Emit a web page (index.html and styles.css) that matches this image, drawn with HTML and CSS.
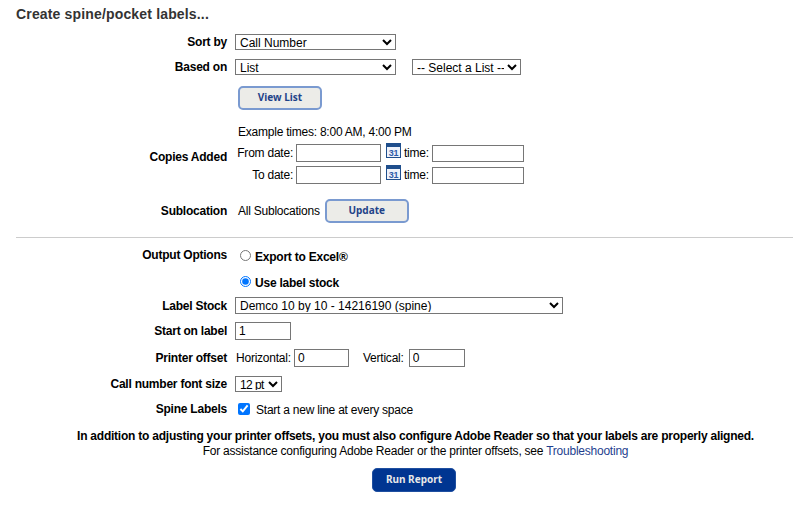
FILE: index.html
```html
<!DOCTYPE html>
<html lang="en">
<head>
    <meta charset="UTF-8">
    <title>Create spine/pocket labels</title>
    <link rel="stylesheet" href="styles.css">
</head>
<body>
    <h1>Create spine/pocket labels...</h1>

    <div class="row row-sort">
        <label class="name">Sort by</label>
        <select class="w-wide"><option>Call Number</option></select>
    </div>
    <div class="row row-based">
        <label class="name">Based on</label>
        <select class="w-wide"><option>List</option></select>
        <select class="w-list"><option>-- Select a List --</option></select>
    </div>
    <div class="row row-view">
        <button class="btn btn-view">View List</button>
    </div>

    <div class="row row-copies">
        <label class="name">Copies Added</label>
        <div class="dates">
            <div class="example">Example times: 8:00 AM, 4:00 PM</div>
            <div class="date-line">
                <span class="date-label">From date:</span>
                <input class="date-input" type="text">
                <svg class="cal" viewBox="0 0 15 15" width="15" height="15"><rect x="0.5" y="0.5" width="14" height="14" fill="#eef2fa" stroke="#1f4e8c"/><rect width="15" height="4" fill="#1f4e8c"/><text x="7.5" y="13" text-anchor="middle" class="cal-num">31</text></svg>
                <span class="time-label">time:</span>
                <input class="time-input" type="text">
            </div>
            <div class="date-line">
                <span class="date-label">To date:</span>
                <input class="date-input" type="text">
                <svg class="cal" viewBox="0 0 15 15" width="15" height="15"><rect x="0.5" y="0.5" width="14" height="14" fill="#eef2fa" stroke="#1f4e8c"/><rect width="15" height="4" fill="#1f4e8c"/><text x="7.5" y="13" text-anchor="middle" class="cal-num">31</text></svg>
                <span class="time-label">time:</span>
                <input class="time-input" type="text">
            </div>
        </div>
    </div>

    <div class="row row-subloc">
        <label class="name">Sublocation</label>
        <span class="subloc-value">All Sublocations</span>
        <button class="btn btn-update">Update</button>
    </div>

    <hr>

    <div class="row row-output">
        <label class="name">Output Options</label>
        <label class="choice"><input type="radio" name="output"> <span>Export to Excel®</span></label>
    </div>
    <div class="row row-stock-choice">
        <label class="choice"><input type="radio" name="output" checked> <span>Use label stock</span></label>
    </div>
    <div class="row row-stock">
        <label class="name">Label Stock</label>
        <select class="w-stock"><option>Demco 10 by 10 - 14216190 (spine)</option></select>
    </div>
    <div class="row row-start">
        <label class="name">Start on label</label>
        <input class="num-start" type="text" value="1">
    </div>
    <div class="row row-offset">
        <label class="name">Printer offset</label>
        <span class="off-h">Horizontal:</span>
        <input class="num-off" type="text" value="0">
        <span class="off-v">Vertical:</span>
        <input class="num-off num-off-v" type="text" value="0">
    </div>
    <div class="row row-font">
        <label class="name">Call number font size</label>
        <select class="w-font"><option>12 pt</option></select>
    </div>
    <div class="row row-spine">
        <label class="name">Spine Labels</label>
        <label class="check"><input type="checkbox" checked> <span>Start a new line at every space</span></label>
    </div>

    <p class="note-bold">In addition to adjusting your printer offsets, you must also configure Adobe Reader so that your labels are properly aligned.</p>
    <p class="note">For assistance configuring Adobe Reader or the printer offsets, see <a href="#">Troubleshooting</a></p>

    <div class="actions">
        <button class="btn btn-run">Run Report</button>
    </div>
</body>
</html>
```

FILE: styles.css
```css
body {
    margin: 0;
    background: #fff;
    color: #000;
    font-family: "Liberation Sans", Arial, sans-serif;
    font-size: 12px;
    letter-spacing: -0.23px;
}

h1 {
    margin: 0;
    padding: 7px 0 0 16px;
    height: 27px;
    box-sizing: border-box;
    font-size: 14px;
    line-height: 14px;
    letter-spacing: 0.16px;
    color: #333;
}

.row {
    display: flex;
    align-items: center;
    padding-left: 16px;
}

.name {
    width: 211px;
    margin-right: 8px;
    text-align: right;
    font-weight: bold;
    flex: none;
}

select,
input[type="text"] {
    box-sizing: border-box;
    margin: 0;
    background: #fff;
    border: 1px solid #767676;
    border-radius: 0;
    font-family: "Liberation Sans", Arial, sans-serif;
    font-size: 12px;
    color: #000;
}

select {
    padding-top: 0;
    padding-bottom: 1px;
}

input[type="text"] {
    padding: 1px 3px;
}

.w-wide { width: 161px; height: 16px; }
.w-list { width: 109px; height: 16px; margin-left: 16px; }
.w-stock { width: 328px; height: 17px; }
.w-font { width: 47px; height: 16px; letter-spacing: -0.6px; }

.row-sort { margin-top: 7px; }
.row-based { margin-top: 9px; }
.row-view { margin-top: 11px; padding-left: 238px; }

.btn {
    box-sizing: border-box;
    width: 84px;
    height: 24px;
    padding: 0 0 2px;
    border: 2px solid #7a9ad0;
    border-radius: 5px;
    background: #ecece8;
    color: #1f4388;
    font-family: "Noto Sans", sans-serif;
    font-size: 10px;
    font-weight: bold;
}

.row-copies { margin-top: 15px; }
.row-copies .name { margin-top: 1px; }

.example { height: 19px; line-height: 14px; padding-left: 3px; }

.date-line {
    display: flex;
    align-items: center;
    height: 18px;
    margin-bottom: 4px;
}

.date-label {
    width: 58px;
    text-align: right;
    margin-right: 3px;
}

.date-input { width: 85px; height: 18px; }
.time-input { width: 92px; height: 17px; }

.cal { margin: -6px 3px 0 5px; flex: none; }
.cal-num { font-size: 9px; font-weight: bold; fill: #2f5aa8; font-family: "Liberation Sans", sans-serif; }
.time-label { width: 28px; }

.row-subloc { margin-top: 11px; }
.subloc-value { margin-left: 3px; }
.row-subloc .btn { margin-left: 5px; }

hr {
    margin: 14px 0 0 16px;
    border: none;
    border-top: 1px solid #ccc;
}

.choice {
    display: flex;
    align-items: center;
    font-weight: bold;
}

.choice input {
    width: 11px;
    height: 11px;
    margin: 0 4px 0 5px;
    accent-color: #0075ff;
}

.choice span { margin-top: 2px; }

.row-output { margin-top: 9px; height: 17px; }
.row-output .name { margin-top: -2px; }
.row-stock-choice { margin-top: 9px; padding-left: 235px; height: 17px; }
.row-stock { margin-top: 7px; }
.row-start { margin-top: 8px; }
.num-start { width: 56px; height: 18px; }
.row-offset { margin-top: 9px; }
.off-h { width: 58px; margin-left: 1px; }
.num-off { width: 55px; height: 18px; }
.num-off-v { width: 56px; }
.off-v { margin: 0 5px 0 14px; }
.row-font { margin-top: 9px; }
.row-spine { margin-top: 9px; }
.check { display: flex; align-items: center; }
.check input { width: 12px; height: 12px; margin: 0 6px 0 3px; accent-color: #0075ff; }
.check span { margin-top: 2px; }

.note-bold,
.note {
    margin: 0;
    padding-left: 38px;
    text-align: center;
    line-height: 15px;
}

.note-bold { margin-top: 12px; font-weight: bold; }

a { color: #1f3f8f; text-decoration: none; }

.actions {
    display: flex;
    justify-content: center;
    margin-top: 9px;
    padding-left: 35px;
}

.btn-run {
    background: #003591;
    border: 1px solid #1f4fa0;
    color: #e8e8e8;
}
```
